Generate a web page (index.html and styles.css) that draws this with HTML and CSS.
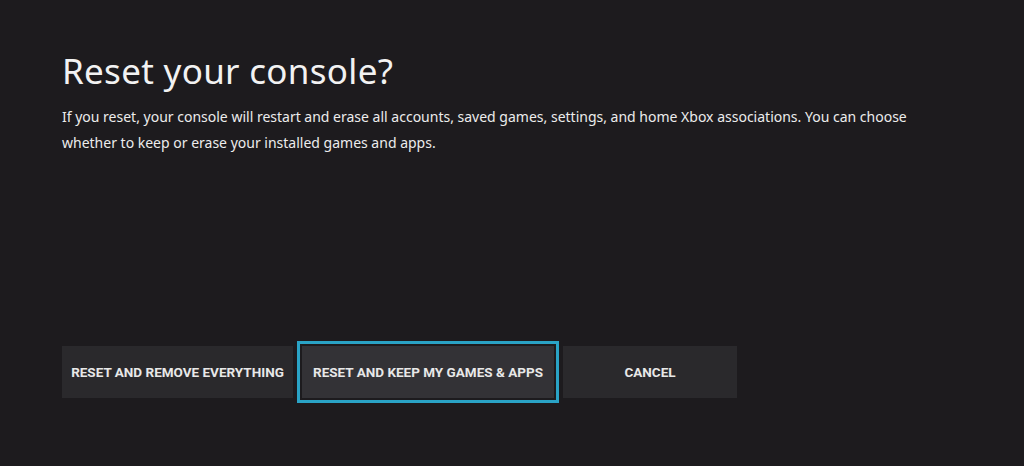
FILE: index.html
```html
<!DOCTYPE html>
<html>
<head>
<meta charset="utf-8">
<link rel="stylesheet" href="styles.css">
</head>
<body>
<main class="screen">
  <section class="intro">
    <h1 class="title">Reset your console?</h1>
    <p class="desc">If you reset, your console will restart and erase all accounts, saved games, settings, and home Xbox associations. You can choose whether to keep or erase your installed games and apps.</p>
  </section>
  <div class="actions">
    <button class="btn btn-wide">RESET AND REMOVE EVERYTHING</button>
    <button class="btn btn-focus">RESET AND KEEP MY GAMES &amp; APPS</button>
    <button class="btn btn-cancel">CANCEL</button>
  </div>
</main>
</body>
</html>
```
FILE: styles.css
```css
html, body {
  margin: 0;
  padding: 0;
  background: #1d1b1e;
  width: 1024px;
  height: 466px;
  overflow: hidden;
}
.screen {
  box-sizing: border-box;
  height: 466px;
  padding: 49px 0 0 62px;
  display: flex;
  flex-direction: column;
  font-family: "Noto Sans", "Open Sans", sans-serif;
  color: #f2f2f2;
}
.title {
  margin: 0;
  font-size: 35px;
  font-weight: 400;
  line-height: 44px;
  letter-spacing: 0.3px;
}
.desc {
  margin: 11px 0 0 0;
  width: 880px;
  font-size: 14px;
  line-height: 26px;
  color: #ececec;
}
.actions {
  margin-top: 190px;
  display: flex;
  gap: 5px;
  align-items: center;
}
.btn {
  box-sizing: border-box;
  height: 52px;
  border: none;
  background: #2a292c;
  color: #e8e8e8;
  font-family: "Roboto", "Liberation Sans", sans-serif;
  font-weight: 700;
  font-size: 13.5px;
  letter-spacing: 0;
  padding: 0;
}
.btn-wide { width: 231px; }
.btn-focus {
  width: 252px;
  margin-left: 4px;
  margin-right: 4px;
  background: #333236;
  outline: 3px solid #2aa3c6;
  outline-offset: 2px;
}
.btn-cancel { width: 174px; }
```
